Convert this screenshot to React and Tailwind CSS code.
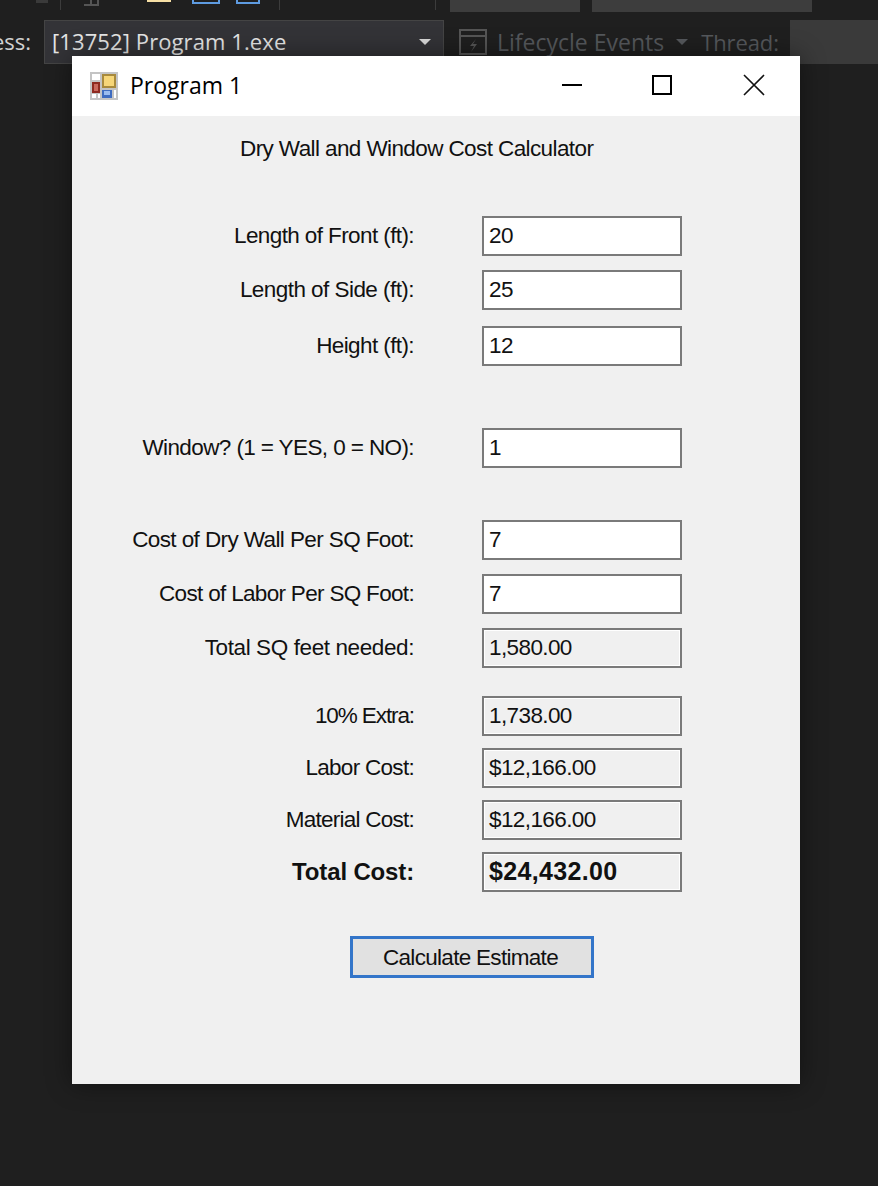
import React from "react";

const sans = "font-['Liberation_Sans',Arial,sans-serif]";
const ui = "font-['Open_Sans','Noto_Sans',sans-serif]";

function Row({ label, value, readOnly, bold, mt, track = "tracking-[-0.6px]" }) {
  return (
    <div className={`flex h-10 items-center ${mt}`}>
      <div className={`w-[342px] shrink-0 text-right text-[#111] ${bold ? "text-[24px] font-bold tracking-[-0.15px]" : `text-[22.5px] ${track}`}`}>{label}</div>
      <div
        className={`ml-[68px] flex h-10 w-[200px] items-center border-2 border-[#7a7a7a] pl-[5px] text-[#111] ${
          readOnly ? "bg-[#f0f0f0] shadow-[inset_0_0_0_1px_#fff]" : "bg-white"
        } ${bold ? "text-[25px] font-bold tracking-[0.35px]" : "text-[22.5px] tracking-[-0.6px]"}`}
      >
        {value}
      </div>
    </div>
  );
}

function AppIcon() {
  return (
    <svg width="28" height="28" viewBox="0 0 28 28" className="shrink-0">
      <rect width="28" height="28" fill="#c4c4c4" />
      <rect x="2" y="2" width="8" height="6" fill="#fff" />
      <rect x="12" y="2" width="14" height="14" fill="#a88a3c" />
      <rect x="14" y="4" width="10" height="10" fill="#f6d678" />
      <rect x="2" y="10" width="8" height="11" fill="#8e2a20" />
      <rect x="4" y="12" width="4" height="7" fill="#c9685c" />
      <rect x="12" y="18" width="10" height="8" fill="#3f6cc0" />
      <rect x="14" y="19" width="6" height="4" fill="#9bbcef" />
      <rect x="2" y="22" width="4" height="4" fill="#fff" />
      <rect x="8" y="22" width="2" height="4" fill="#fff" />
      <rect x="24" y="18" width="2" height="8" fill="#fff" />
    </svg>
  );
}

function Caret({ className }) {
  return (
    <svg width="12" height="6" viewBox="0 0 12 6" className={className}>
      <path d="M0 0H12L6 6Z" fill="currentColor" />
    </svg>
  );
}

export default function App() {
  return (
    <div className={`relative h-[1186px] w-[878px] overflow-hidden bg-[#1f1f1f] ${ui}`}>
      {/* top toolbar strip */}
      <div className="flex h-3 items-start">
        <div className="ml-[36px] h-[3px] w-[12px] bg-[#3a3a3a]" />
        <div className="ml-[12px] h-[10px] w-px bg-[#3c3c3c]" />
        <svg width="24" height="12" viewBox="0 0 24 12" className="ml-[21px]">
          <path d="M9 0V5H2M16 0V5H9" fill="none" stroke="#555" strokeWidth="2" />
        </svg>
        <div className="ml-[41px] h-[2px] w-[24px] bg-[#f6dfa4]" />
        <div className="ml-[21px] h-[4px] w-[28px] border-x-2 border-b-2 border-[#5e9be0]" />
        <div className="ml-[16px] h-[4px] w-[24px] border-x-2 border-b-2 border-[#5e9be0]" />
        <div className="ml-[19px] h-[10px] w-px bg-[#3c3c3c]" />
        <div className="ml-[155px] h-[10px] w-px bg-[#3c3c3c]" />
        <div className="ml-[14px] h-3 w-[130px] bg-[#3d3d3d]" />
        <div className="ml-[12px] h-3 w-[220px] bg-[#3d3d3d]" />
      </div>

      {/* second toolbar row */}
      <div className="mt-2 flex h-11 items-center text-[22px]">
        <div className="flex w-[44px] shrink-0 justify-end pb-[2px] pr-[13px]">
          <span className="whitespace-nowrap text-[#d0d0d0]">ess:</span>
        </div>
        <div className="flex h-11 w-[400px] shrink-0 items-center border border-[#444] bg-[#333337] pl-[7px] pr-[12px] text-[#e6e6e6]">
          <span className="flex-1 whitespace-nowrap pb-[2px] tracking-[0.1px]">[13752] Program 1.exe</span>
          <Caret className="text-[#d8d8d8]" />
        </div>
        <svg width="28" height="26" viewBox="0 0 28 26" className="ml-[15px] shrink-0">
          <path d="M1 1H27V25H1ZM1 7H27" fill="none" stroke="#555" strokeWidth="2" />
          <path d="M17 10L11 17H15L12 23L18 15H14Z" fill="#555" />
        </svg>
        <span className="ml-[10px] whitespace-nowrap text-[23px] text-[#55585c]">Lifecycle Events</span>
        <Caret className="ml-[12px] text-[#55585c]" />
        <span className="ml-[13px] whitespace-nowrap tracking-[-0.1px] text-[#55585c]">Thread:</span>
        <div className="ml-[11px] h-11 flex-1 bg-[#3a3a3a]" />
      </div>

      {/* app window */}
      <div className={`absolute left-[72px] top-[56px] h-[1028px] w-[728px] bg-[#f0f0f0] shadow-[0_0_24px_rgba(0,0,0,0.45)] ${sans}`}>
        <div className={`flex h-[60px] items-center bg-white pl-[18px] ${ui}`}>
          <AppIcon />
          <span className="ml-[12px] pb-[2px] text-[23px] text-black">Program 1</span>
          <div className="ml-auto flex items-center pb-[2px]">
            <div className="h-[2px] w-5 bg-black" />
            <div className="ml-[70px] h-5 w-5 border-2 border-black" />
            <svg width="22" height="22" viewBox="0 0 22 22" className="ml-[71px] mr-[35px]">
              <path d="M1 1L21 21M21 1L1 21" stroke="#111" strokeWidth="1.6" />
            </svg>
          </div>
        </div>

        <div className="flex h-[64px] items-center pl-[168px] pt-[1px] text-[22.5px] tracking-[-0.6px] text-[#111]">
          Dry Wall and Window Cost Calculator
        </div>

        <div className="mt-[36px] flex flex-col">
          <Row label="Length of Front (ft):" value="20" />
          <Row label="Length of Side (ft):" value="25" mt="mt-[14px]" track="tracking-[-0.55px]" />
          <Row label="Height (ft):" value="12" mt="mt-[16px]" />
          <Row label="Window? (1 = YES, 0 = NO):" value="1" mt="mt-[62px]" />
          <Row label="Cost of Dry Wall Per SQ Foot:" value="7" mt="mt-[52px]" />
          <Row label="Cost of Labor Per SQ Foot:" value="7" mt="mt-[14px]" track="tracking-[-0.68px]" />
          <Row label="Total SQ feet needed:" value="1,580.00" readOnly mt="mt-[14px]" track="tracking-[-0.4px]" />
          <Row label="10% Extra:" value="1,738.00" readOnly mt="mt-[28px]" track="tracking-[-1.1px]" />
          <Row label="Labor Cost:" value="$12,166.00" readOnly mt="mt-[12px]" track="tracking-[-0.7px]" />
          <Row label="Material Cost:" value="$12,166.00" readOnly mt="mt-[12px]" track="tracking-[-0.75px]" />
          <Row label="Total Cost:" value="$24,432.00" readOnly bold mt="mt-[12px]" />
        </div>

        <button className="ml-[278px] mt-[44px] block h-[42px] w-[244px] border-[3px] border-[#3375c9] bg-[#e1e1e1] pr-[3px] pt-[2px] text-[22.5px] tracking-[-0.7px] text-[#111]">
          Calculate Estimate
        </button>
      </div>
    </div>
  );
}
